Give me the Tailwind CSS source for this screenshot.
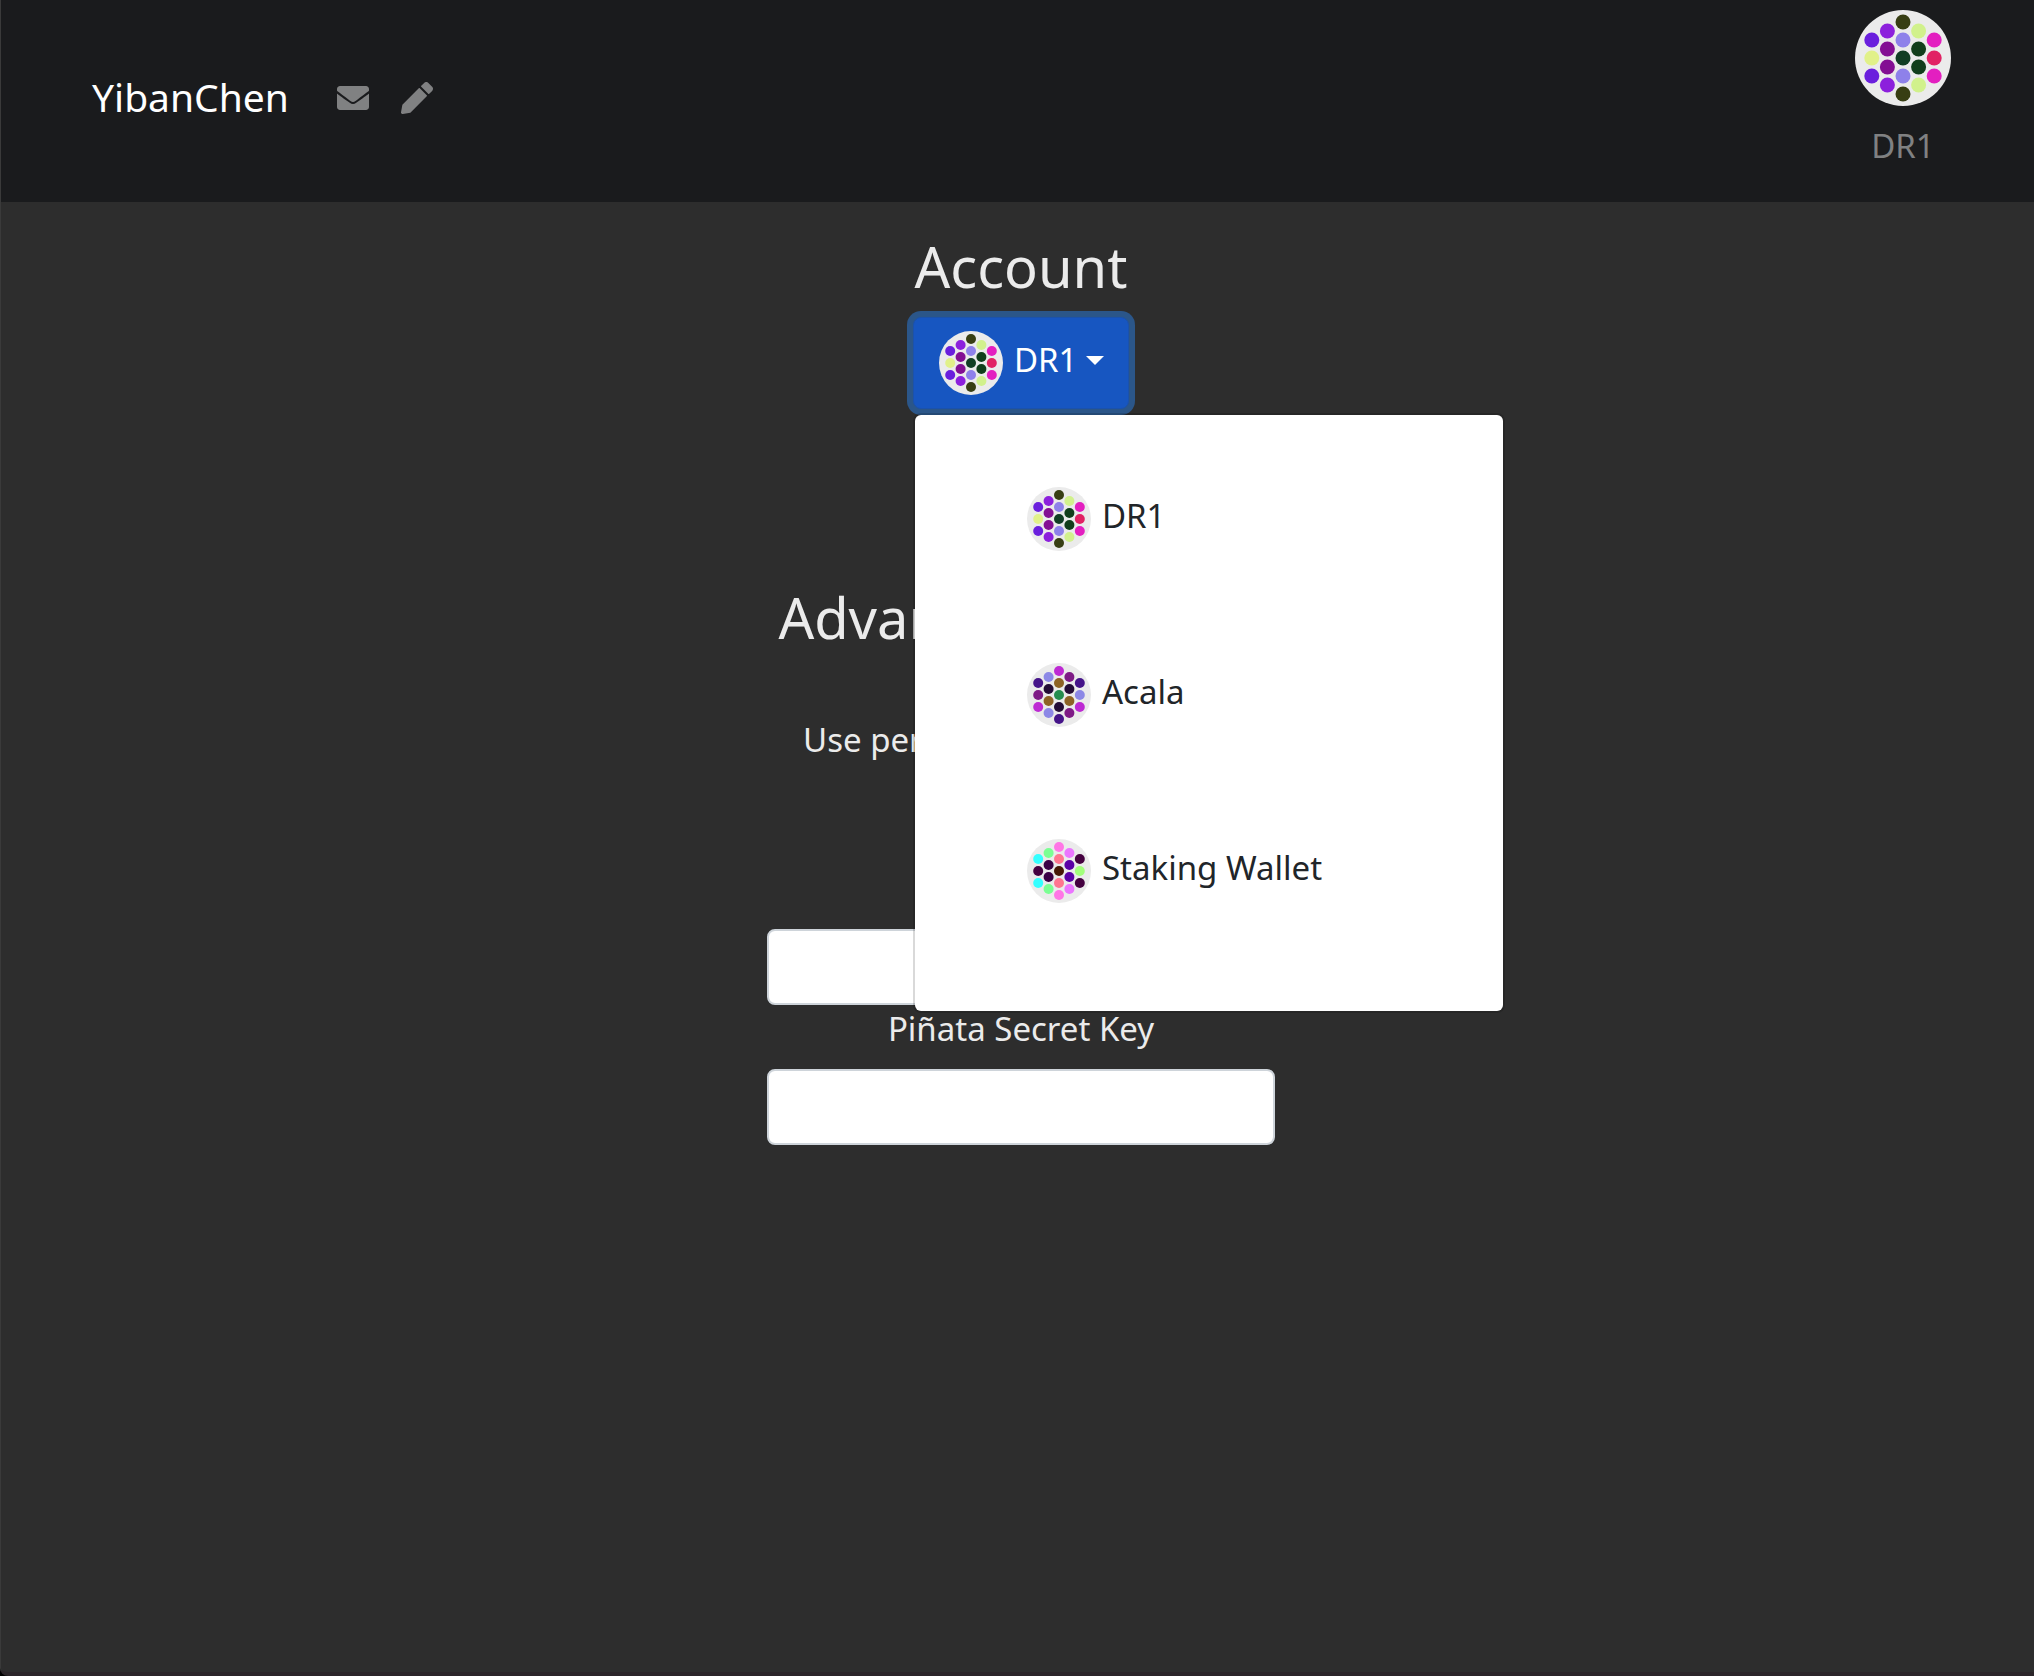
<!DOCTYPE html>
<html lang="en">
<head>
<meta charset="utf-8">
<meta name="viewport" content="width=device-width, initial-scale=1">
<title>YibanChen</title>
<script src="https://cdn.jsdelivr.net/npm/@tailwindcss/browser@4"></script>
</head>
<body class="bg-black font-['Noto_Sans',sans-serif] text-[33px] leading-12 text-[#ebebeb]">

<!-- Account identicons, 64 units across -->
<svg class="hidden" aria-hidden="true">
  <symbol id="id-dr1" viewBox="0 0 64 64">
    <circle cx="32" cy="32" r="32" fill="#ebebeb"/>
    <g fill="#373e13"><circle cx="32" cy="8" r="5"/><circle cx="32" cy="56" r="5"/></g>
    <g fill="#8e81ea"><circle cx="32" cy="20" r="5"/><circle cx="32" cy="44" r="5"/></g>
    <circle cx="32" cy="32" r="5" fill="#113e24"/>
    <g fill="#8c20dc"><circle cx="21.6" cy="14" r="5"/><circle cx="21.6" cy="50" r="5"/></g>
    <g fill="#830f93"><circle cx="21.6" cy="26" r="5"/><circle cx="21.6" cy="38" r="5"/></g>
    <g fill="#d1f18c"><circle cx="42.4" cy="14" r="5"/><circle cx="42.4" cy="50" r="5"/></g>
    <g fill="#113e1b"><circle cx="42.4" cy="26" r="5"/><circle cx="42.4" cy="38" r="5"/></g>
    <g fill="#6a1fdd"><circle cx="11.2" cy="20" r="5"/><circle cx="11.2" cy="44" r="5"/></g>
    <circle cx="11.2" cy="32" r="5" fill="#e1f189"/>
    <g fill="#e31fc0"><circle cx="52.8" cy="20" r="5"/><circle cx="52.8" cy="44" r="5"/></g>
    <circle cx="52.8" cy="32" r="5" fill="#e12264"/>
  </symbol>
  <symbol id="id-acala" viewBox="0 0 64 64">
    <circle cx="32" cy="32" r="32" fill="#ebebeb"/>
    <g fill="#bd2ad3"><circle cx="32" cy="8" r="5"/><circle cx="11.2" cy="44" r="5"/><circle cx="52.8" cy="44" r="5"/></g>
    <g fill="#8c88e6"><circle cx="21.6" cy="14" r="5"/><circle cx="21.6" cy="50" r="5"/><circle cx="52.8" cy="32" r="5"/></g>
    <g fill="#7e1a86"><circle cx="42.4" cy="14" r="5"/><circle cx="42.4" cy="50" r="5"/><circle cx="11.2" cy="32" r="5"/></g>
    <g fill="#451489"><circle cx="11.2" cy="20" r="5"/><circle cx="52.8" cy="20" r="5"/><circle cx="32" cy="56" r="5"/></g>
    <g fill="#8d6325"><circle cx="32" cy="20" r="5"/><circle cx="21.6" cy="38" r="5"/><circle cx="42.4" cy="38" r="5"/></g>
    <g fill="#240d37"><circle cx="21.6" cy="26" r="5"/><circle cx="42.4" cy="26" r="5"/><circle cx="32" cy="44" r="5"/></g>
    <circle cx="32" cy="32" r="5" fill="#258d4e"/>
  </symbol>
  <symbol id="id-staking" viewBox="0 0 64 64">
    <circle cx="32" cy="32" r="32" fill="#ebebeb"/>
    <g fill="#ff76e6"><circle cx="32" cy="8" r="5"/><circle cx="32" cy="56" r="5"/></g>
    <g fill="#ff7690"><circle cx="32" cy="20" r="5"/><circle cx="32" cy="44" r="5"/></g>
    <circle cx="32" cy="32" r="5" fill="#451a06"/>
    <g fill="#7bff93"><circle cx="21.6" cy="14" r="5"/><circle cx="21.6" cy="50" r="5"/></g>
    <g fill="#3a0145"><circle cx="21.6" cy="26" r="5"/><circle cx="21.6" cy="38" r="5"/></g>
    <g fill="#eb76ff"><circle cx="42.4" cy="14" r="5"/><circle cx="42.4" cy="50" r="5"/></g>
    <g fill="#5b01a6"><circle cx="42.4" cy="26" r="5"/><circle cx="42.4" cy="38" r="5"/></g>
    <g fill="#34ffff"><circle cx="11.2" cy="20" r="5"/><circle cx="11.2" cy="44" r="5"/></g>
    <g fill="#450140"><circle cx="11.2" cy="32" r="5"/><circle cx="52.8" cy="20" r="5"/><circle cx="52.8" cy="44" r="5"/></g>
    <circle cx="52.8" cy="32" r="5" fill="#a2ff7b"/>
  </symbol>
</svg>

<div class="flex min-h-screen flex-col overflow-hidden rounded-bl-lg border-b-4 border-l border-b-[#2b2529] border-l-[#3a3a3a] bg-[#2d2d2d]">
  <header class="flex items-center justify-between bg-[#1a1b1d] pt-[10px] pr-[83px] pb-8 pl-[91px] text-[#808182]">
    <nav class="mt-4 flex items-center">
      <a href="#" class="mr-12 mb-[2px] text-[39px] text-white">YibanChen</a>
      <a href="#" aria-label="Messages" class="mr-8">
        <svg class="size-8" viewBox="0 0 512 512" fill="currentColor"><path d="M502.300 190.800c3.900-3.100 9.700-.2 9.700 4.700V400c0 26.500-21.500 48-48 48H48c-26.500 0-48-21.500-48-48V195.600c0-5 5.700-7.800 9.700-4.700 22.400 17.400 52.100 39.500 154.100 113.600 21.100 15.400 56.700 47.800 92.200 47.600 35.700.3 72-32.800 92.300-47.600 102-74.100 131.600-96.300 154-113.700zM256 320c23.200.4 56.600-29.200 73.400-41.400 132.700-96.300 142.800-104.700 173.400-128.700 5.800-4.500 9.200-11.500 9.200-18.900v-19c0-26.500-21.500-48-48-48H48c-26.500 0-48 21.500-48 48v19c0 7.400 3.400 14.300 9.200 18.900 30.600 23.900 40.700 32.400 173.400 128.700 16.800 12.200 50.200 41.800 73.400 41.400z"/></svg>
      </a>
      <a href="#" aria-label="Compose">
        <svg class="size-8" viewBox="0 0 512 512" fill="currentColor"><path d="M498 142l-46 46c-5 5-13 5-17 0L324 77c-5-5-5-12 0-17l46-46c19-19 49-19 68 0l60 60c19 19 19 49 0 68zm-214-42L22 362 0 484c-3 16 12 30 28 28l122-22 262-262c5-5 5-13 0-17L301 100c-4-5-12-5-17 0z"/></svg>
      </a>
    </nav>
    <a href="#" class="flex flex-col items-center gap-4">
      <svg class="size-24"><use href="#id-dr1"/></svg>
      <span>DR1</span>
    </a>
  </header>

  <main class="flex flex-col items-center pt-8 pl-[7px]">
    <h1 class="text-[56px] leading-16">Account</h1>

    <div class="relative mt-[19px]">
      <button type="button" aria-haspopup="true" aria-expanded="true" class="flex h-[92px] w-[216px] items-center rounded-lg border border-[#1b52ac] bg-[#1756c1] pl-[25px] text-white ring-6 ring-[#2b5689]">
        <svg class="mr-[11px] size-16"><use href="#id-dr1"/></svg>
        <span class="mb-[6px]">DR1</span>
        <svg class="mb-[6px] ml-2 h-[9px] w-[18px]" viewBox="0 0 18 9" fill="currentColor"><path d="M0 0h18L9 9z"/></svg>
      </button>

      <div role="menu" class="absolute top-[98px] left-[2px] flex w-[588px] flex-col rounded-md bg-white pt-4 pb-[52px] text-[#212529] shadow-[0_0_0_2px_rgba(0,0,0,0.15)]">
        <a href="#" role="menuitem" class="flex h-44 items-center gap-[11px] px-28">
          <svg class="size-16"><use href="#id-dr1"/></svg>
          <span class="mb-[6px]">DR1</span>
        </a>
        <a href="#" role="menuitem" class="flex h-44 items-center gap-[11px] px-28">
          <svg class="size-16"><use href="#id-acala"/></svg>
          <span class="mb-[6px]">Acala</span>
        </a>
        <a href="#" role="menuitem" class="flex h-44 items-center gap-[11px] px-28">
          <svg class="size-16"><use href="#id-staking"/></svg>
          <span class="mb-[6px]">Staking Wallet</span>
        </a>
      </div>
    </div>

    <h2 class="mt-44 text-[56px] leading-16">Advanced Settings</h2>

    <form class="mt-[67px] flex flex-col items-center">
      <label for="personal">Use personal Piñata storage</label>
      <input id="personal" type="checkbox" class="mt-6 mb-[51px] size-[26px]">
      <label for="api-key">API Key</label>
      <input id="api-key" type="text" class="mt-4 h-[76px] w-[508px] rounded-lg border-2 border-[#ced4da] bg-white px-6 text-[#495057]">
      <label for="secret-key">Piñata Secret Key</label>
      <input id="secret-key" type="text" class="mt-4 h-[76px] w-[508px] rounded-lg border-2 border-[#ced4da] bg-white px-6 text-[#495057]">
    </form>
  </main>
</div>
</body>
</html>
